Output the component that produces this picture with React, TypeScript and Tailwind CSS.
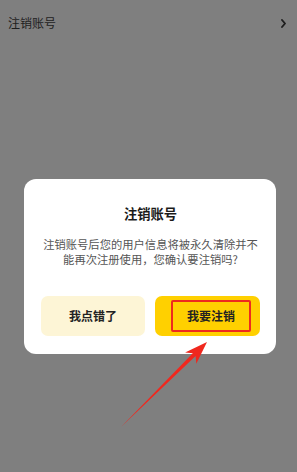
export default function App() {
  const font = { fontFamily: '"Noto Sans CJK SC", "Noto Sans", sans-serif' };
  return (
    <div className="relative w-[297px] h-[472px] bg-[#7f7f7f] overflow-hidden" style={font}>
      <div className="flex items-center justify-between h-[46px] pl-[8px] pr-[11px]">
        <span className="text-[12px] text-[#1e1e1e] leading-none">注销账号</span>
        <svg width="5" height="9" viewBox="0 0 5 9">
          <path d="M1 1 L4 4.5 L1 8" fill="none" stroke="#1e1e1e" strokeWidth="1.9" strokeLinecap="round" strokeLinejoin="round" />
        </svg>
      </div>
      <div className="mt-[133px] ml-[24px] w-[252px] bg-white rounded-[12px] pt-[26px] pb-[18px] pl-[17px] pr-[16px] flex flex-col items-center">
        <div className="text-[13.3px] font-bold text-[#1a1a1a] leading-[18px]">注销账号</div>
        <div className="mt-[14px] text-[11.3px] text-[#555] leading-[14.5px] text-center">
          注销账号后您的用户信息将被永久清除并不
          <br />
          能再次注册使用，您确认要注销吗?
        </div>
        <div className="mt-[30px] w-full flex gap-[10px]">
          <div className="w-[104px] h-[40px] rounded-[7px] bg-[#fdf5d6] flex items-center justify-center text-[12px] font-bold text-[#222]">
            我点错了
          </div>
          <div className="flex-1 h-[40px] rounded-[7px] bg-[#ffd000] flex items-center pl-[16px]">
            <div className="w-[80px] h-[32px] border-[2px] border-[#ee2a1e] rounded-[2px] flex items-center justify-center text-[12px] font-bold text-[#222]">
              我要注销
            </div>
          </div>
        </div>
      </div>
      <svg className="absolute left-0 top-0" width="297" height="472" viewBox="0 0 297 472">
        <polygon
          points="121,427 195.6,356 196.3,363.8 207,342 185.1,352.4 192.8,353.2"
          fill="#f0281e"
        />
      </svg>
    </div>
  );
}
